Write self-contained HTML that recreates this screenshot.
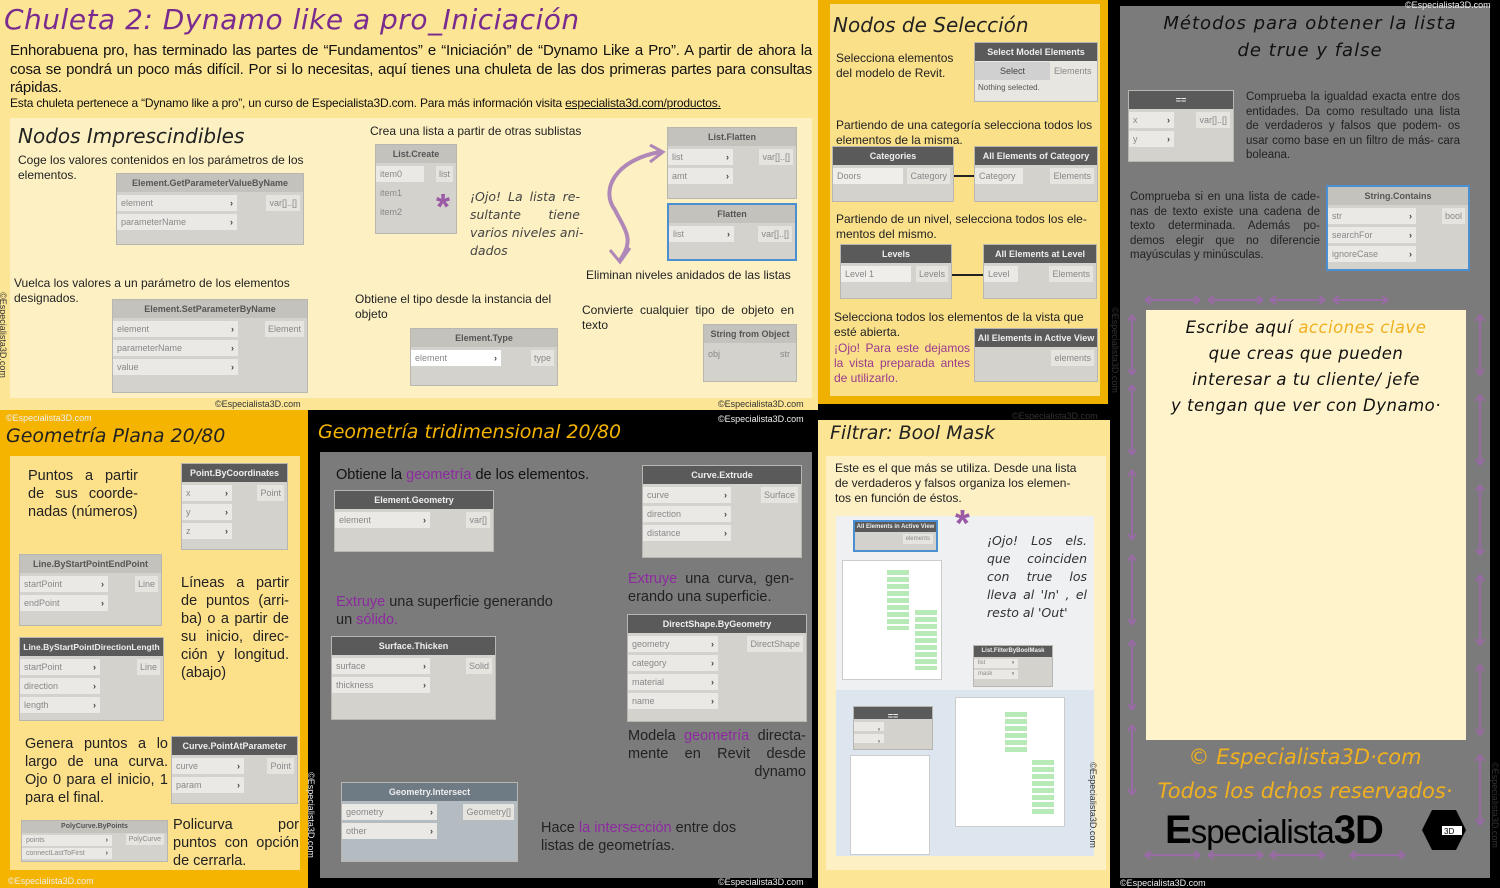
<!DOCTYPE html>
<html><head><meta charset="utf-8">
<style>
*{margin:0;padding:0;box-sizing:border-box}
body{width:1500px;height:888px;position:relative;overflow:hidden;background:#000;font-family:"Liberation Sans",sans-serif}
.a{position:absolute}
.hw{font-family:"DejaVu Sans","Liberation Sans",sans-serif;font-style:italic;font-weight:normal}
.t{font-size:12.5px;color:#222;line-height:15px}
.j{text-align:justify}
.jl div{text-align:justify;text-align-last:justify;white-space:nowrap}
.n{position:absolute;background:#d4d2cd;border:1px solid #b8b6b0;font-size:9px;color:#888;overflow:hidden}
.n .h{background:#c4c2bd;color:#555;text-align:center;height:18px;line-height:18px;font-weight:bold;font-size:9px;white-space:nowrap}
.n.d .h{background:#5a5a5a;color:#eee}
.n .r{background:#ebe9e5;height:16px;line-height:16px;margin-top:3px;padding-left:4px;position:relative}
.n .r:after{content:"›";position:absolute;right:4px;color:#444;font-weight:bold}
.n .r.x:after{content:""}
.n .o{position:absolute;right:3px;background:#e6e4df;padding:0 3px;height:16px;line-height:16px}
.pu{color:#8e2aa0}
.cp{font-size:9px;color:#333}
.cpw{font-size:9px;color:#eee}
</style></head><body>

<!-- top-left panel -->
<div class="a" style="left:0;top:0;width:818px;height:410px;background:#fce594"></div>
<div class="a hw" style="left:4px;top:3px;font-size:28px;color:#7a2b8f;letter-spacing:0.5px">Chuleta 2: Dynamo like a pro_Iniciación</div>
<div class="a" style="left:10px;top:42px;width:802px;font-size:15px;line-height:18.5px;color:#111;text-align:justify;letter-spacing:-0.2px">Enhorabuena pro, has terminado las partes de “Fundamentos” e “Iniciación” de “Dynamo Like a Pro”. A partir de ahora la cosa se pondrá un poco más difícil. Por si lo necesitas, aquí tienes una chuleta de las dos primeras partes para consultas rápidas.</div>
<div class="a" style="left:10px;top:96px;font-size:12px;color:#111;letter-spacing:-0.2px">Esta chuleta pertenece a “Dynamo like a pro”, un curso de Especialista3D.com. Para más información visita <u>especialista3d.com/productos.</u></div>
<div class="a" style="left:10px;top:118px;width:802px;height:280px;background:#fdf1c3"></div>
<div class="a hw" style="left:18px;top:124px;font-size:20px;color:#222">Nodos Imprescindibles</div>
<div class="a t" style="left:18px;top:153px;width:290px;font-size:12px">Coge los valores contenidos en los parámetros de los elementos.</div>
<div class="n" style="left:116px;top:173px;width:188px;height:72px"><div class="h">Element.GetParameterValueByName</div><div class="r" style="width:120px">element</div><div class="r" style="width:120px">parameterName</div><span class="o" style="top:21px">var[]..[]</span></div>
<div class="a t" style="left:14px;top:276px;width:296px;font-size:12px">Vuelca los valores a un parámetro de los elementos designados.</div>
<div class="n" style="left:112px;top:299px;width:196px;height:94px"><div class="h">Element.SetParameterByName</div><div class="r" style="width:125px">element</div><div class="r" style="width:125px">parameterName</div><div class="r" style="width:125px">value</div><span class="o" style="top:21px">Element</span></div>
<div class="a t" style="left:370px;top:124px;font-size:12px">Crea una lista a partir de otras sublistas</div>
<div class="n" style="left:375px;top:144px;width:82px;height:90px"><div class="h">List.Create</div><div class="r x" style="width:48px">item0</div><div class="r x" style="width:40px;background:none">item1</div><div class="r x" style="width:40px;background:none">item2</div><span class="o" style="top:21px">list</span></div>
<div class="a" style="left:436px;top:186px;font-size:36px;color:#9a5aa6;font-weight:bold">*</div>
<div class="a hw jl" style="left:470px;top:188px;width:110px;font-size:12.5px;line-height:18px;color:#444"><div>¡Ojo! La lista re-</div><div>sultante tiene</div><div>varios niveles ani-</div><div style="text-align-last:left">dados</div></div>
<svg class="a" style="left:595px;top:140px" width="80" height="130"><path d="M65 12 C20 20 5 50 20 70 C30 90 40 100 25 120" stroke="#b088b8" stroke-width="4" fill="none"/><path d="M55 5 L68 12 L55 22" stroke="#b088b8" stroke-width="3" fill="none"/><path d="M15 110 L25 122 L35 108" stroke="#b088b8" stroke-width="3" fill="none"/></svg>
<div class="n" style="left:667px;top:127px;width:130px;height:72px"><div class="h">List.Flatten</div><div class="r" style="width:65px">list</div><div class="r" style="width:65px">amt</div><span class="o" style="top:21px">var[]..[]</span></div>
<div class="n" style="left:667px;top:203px;width:130px;height:58px;border:2px solid #4a90d0"><div class="h">Flatten</div><div class="r" style="width:65px">list</div><span class="o" style="top:21px">var[]..[]</span></div>
<div class="a t" style="left:586px;top:268px;font-size:12px">Eliminan niveles anidados de las listas</div>
<div class="a t" style="left:355px;top:292px;width:205px;font-size:12px">Obtiene el tipo desde la instancia del objeto</div>
<div class="n" style="left:410px;top:328px;width:148px;height:58px"><div class="h">Element.Type</div><div class="r" style="width:90px;background:#fff">element</div><span class="o" style="top:21px">type</span></div>
<div class="a t j" style="left:582px;top:303px;width:212px;font-size:12px">Convierte cualquier tipo de objeto en texto</div>
<div class="n" style="left:703px;top:324px;width:94px;height:58px"><div class="h">String from Object</div><div class="r x" style="width:30px;background:none">obj</div><span class="o" style="top:21px;background:none">str</span></div>
<div class="a cp" style="left:215px;top:399px">©Especialista3D.com</div>
<div class="a cp" style="left:718px;top:399px">©Especialista3D.com</div>
<div class="a cp" style="left:-40px;top:330px;transform:rotate(90deg)">©Especialista3D.com</div>

<!-- bottom-left -->
<div class="a" style="left:0;top:410px;width:308px;height:478px;background:#f4b400"></div>
<div class="a cpw" style="left:6px;top:413px">©Especialista3D.com</div>
<div class="a hw" style="left:6px;top:425px;font-size:19px;color:#222">Geometría Plana 20/80</div>
<div class="a" style="left:10px;top:456px;width:290px;height:414px;background:#fde08a"></div>
<div class="a t j" style="left:28px;top:467px;width:110px;font-size:14.5px;line-height:18px">Puntos a partir de sus coorde- nadas (números)</div>
<div class="n d" style="left:181px;top:463px;width:107px;height:87px"><div class="h">Point.ByCoordinates</div><div class="r" style="width:50px">x</div><div class="r" style="width:50px">y</div><div class="r" style="width:50px">z</div><span class="o" style="top:21px">Point</span></div>
<div class="n" style="left:19px;top:554px;width:143px;height:72px"><div class="h">Line.ByStartPointEndPoint</div><div class="r" style="width:88px">startPoint</div><div class="r" style="width:88px">endPoint</div><span class="o" style="top:21px">Line</span></div>
<div class="a t j" style="left:181px;top:574px;width:108px;font-size:14.5px;line-height:18px">Líneas a partir de puntos (arri- ba) o a partir de su inicio, direc- ción y longitud. (abajo)</div>
<div class="n d" style="left:19px;top:637px;width:145px;height:84px"><div class="h" style="font-size:8.5px">Line.ByStartPointDirectionLength</div><div class="r" style="width:80px">startPoint</div><div class="r" style="width:80px">direction</div><div class="r" style="width:80px">length</div><span class="o" style="top:21px">Line</span></div>
<div class="a t j" style="left:25px;top:735px;width:143px;font-size:14.5px;line-height:18px">Genera puntos a lo largo de una curva. Ojo 0 para el inicio, 1 para el final.</div>
<div class="n d" style="left:171px;top:736px;width:127px;height:68px"><div class="h">Curve.PointAtParameter</div><div class="r" style="width:72px">curve</div><div class="r" style="width:72px">param</div><span class="o" style="top:21px">Point</span></div>
<div class="n" style="left:21px;top:820px;width:147px;height:42px;font-size:7px"><div class="h" style="height:12px;line-height:12px;font-size:7px">PolyCurve.ByPoints</div><div class="r" style="width:90px;height:11px;line-height:11px;margin-top:2px">points</div><div class="r" style="width:90px;height:11px;line-height:11px;margin-top:2px">connectLastToFirst</div><span class="o" style="top:13px;height:11px;line-height:11px">PolyCurve</span></div>
<div class="a t j" style="left:173px;top:816px;width:126px;font-size:14.5px;line-height:18px">Policurva por puntos con opción de cerrarla.</div>
<div class="a cpw" style="left:8px;top:876px">©Especialista3D.com</div>

<!-- bottom middle -->
<div class="a cpw" style="left:718px;top:414px">©Especialista3D.com</div>
<div class="a hw" style="left:318px;top:421px;font-size:19px;color:#f4b400">Geometría tridimensional 20/80</div>
<div class="a" style="left:320px;top:452px;width:492px;height:426px;background:#7b7b7b"></div>
<div class="a" style="left:336px;top:467px;font-size:14.5px;color:#111">Obtiene la <span class="pu">geometría</span> de los elementos.</div>
<div class="n d" style="left:334px;top:490px;width:160px;height:62px"><div class="h">Element.Geometry</div><div class="r" style="width:95px">element</div><span class="o" style="top:21px">var[]</span></div>
<div class="n d" style="left:642px;top:465px;width:160px;height:93px"><div class="h">Curve.Extrude</div><div class="r" style="width:88px">curve</div><div class="r" style="width:88px">direction</div><div class="r" style="width:88px">distance</div><span class="o" style="top:21px">Surface</span></div>
<div class="a t j" style="left:628px;top:570px;width:166px;font-size:14.5px;line-height:18px"><span class="pu">Extruye</span> una curva, gen- erando una superficie.</div>
<div class="a t" style="left:336px;top:593px;width:230px;font-size:14.5px;line-height:18px"><span class="pu">Extruye</span> una superficie generando un <span class="pu">sólido.</span></div>
<div class="n d" style="left:331px;top:636px;width:165px;height:84px"><div class="h">Surface.Thicken</div><div class="r" style="width:98px">surface</div><div class="r" style="width:98px">thickness</div><span class="o" style="top:21px">Solid</span></div>
<div class="n d" style="left:627px;top:614px;width:180px;height:108px"><div class="h">DirectShape.ByGeometry</div><div class="r" style="width:90px">geometry</div><div class="r" style="width:90px">category</div><div class="r" style="width:90px">material</div><div class="r" style="width:90px">name</div><span class="o" style="top:21px">DirectShape</span></div>
<div class="a t jl" style="left:628px;top:727px;width:178px;font-size:14.5px;line-height:18px"><div>Modela <span class="pu">geometría</span> directa-</div><div>mente en Revit desde</div><div style="text-align:right;text-align-last:right">dynamo</div></div>
<div class="n" style="left:341px;top:782px;width:177px;height:80px;background:#b4bcc2"><div class="h" style="background:#6e7a84;color:#eee">Geometry.Intersect</div><div class="r" style="width:95px">geometry</div><div class="r" style="width:95px">other</div><span class="o" style="top:21px">Geometry[]</span></div>
<div class="a t" style="left:541px;top:819px;width:230px;font-size:14.5px;line-height:18px">Hace <span class="pu">la intersección</span> entre dos listas de geometrías.</div>
<div class="a cpw" style="left:718px;top:877px">©Especialista3D.com</div>
<div class="a cpw" style="left:268px;top:810px;transform:rotate(90deg)">©Especialista3D.com</div>

<!-- right column top: Nodos de Seleccion -->
<div class="a" style="left:818px;top:0;width:290px;height:404px;background:#f0b000"></div>
<div class="a" style="left:830px;top:4px;width:270px;height:392px;background:#fbe08a"></div>
<div class="a hw" style="left:833px;top:13px;font-size:20px;color:#222">Nodos de Selección</div>
<div class="a t" style="left:836px;top:51px;width:130px;font-size:12px">Selecciona elementos del modelo de Revit.</div>
<div class="n d" style="left:974px;top:42px;width:124px;height:60px;background:#e8e6e0"><div class="h">Select Model Elements</div><div style="display:flex;font-size:9px;height:18px;line-height:18px;margin-top:1px"><div style="background:#d0d0d0;color:#444;width:75px;text-align:center">Select</div><div style="padding-left:4px">Elements</div></div><div style="font-size:8px;color:#555;padding:3px">Nothing selected.</div></div>
<div class="a t" style="left:836px;top:118px;width:264px;font-size:12px">Partiendo de una categoría selecciona todos los elementos de la misma.</div>
<div class="n d" style="left:832px;top:146px;width:122px;height:56px"><div class="h">Categories</div><div class="r x" style="width:70px;background:#f0eeea">Doors</div><span class="o" style="top:21px">Category</span></div>
<div class="n d" style="left:974px;top:146px;width:124px;height:56px"><div class="h">All Elements of Category</div><div class="r x" style="width:48px">Category</div><span class="o" style="top:21px">Elements</span></div>
<div class="a" style="left:954px;top:175px;width:20px;height:2px;background:#222"></div>
<div class="a t" style="left:836px;top:212px;width:264px;font-size:12px">Partiendo de un nivel, selecciona todos los ele- mentos del mismo.</div>
<div class="n d" style="left:840px;top:244px;width:112px;height:55px"><div class="h">Levels</div><div class="r x" style="width:70px;background:#f0eeea">Level 1</div><span class="o" style="top:21px">Levels</span></div>
<div class="n d" style="left:983px;top:244px;width:114px;height:55px"><div class="h">All Elements at Level</div><div class="r x" style="width:34px">Level</div><span class="o" style="top:21px">Elements</span></div>
<div class="a" style="left:952px;top:274px;width:31px;height:2px;background:#222"></div>
<div class="a t" style="left:834px;top:310px;width:264px;font-size:12px">Selecciona todos los elementos de la vista que esté abierta.</div>
<div class="a" style="left:834px;top:341px;width:136px;font-size:12px;line-height:15px;color:#9a3a8e;text-align:justify">¡Ojo! Para este dejamos la vista preparada antes de utilizarlo.</div>
<div class="n d" style="left:974px;top:328px;width:124px;height:54px"><div class="h">All Elements in Active View</div><span class="o" style="top:21px">elements</span></div>
<div class="a cp" style="left:1012px;top:411px">©Especialista3D.com</div>

<!-- Filtrar bool mask -->
<div class="a" style="left:818px;top:420px;width:292px;height:468px;background:#fce594"></div>
<div class="a hw" style="left:830px;top:422px;font-size:19px;color:#222">Filtrar: Bool Mask</div>
<div class="a" style="left:826px;top:456px;width:280px;height:414px;background:#fdf0c4"></div>
<div class="a t" style="left:835px;top:461px;width:252px;font-size:12px">Este es el que más se utiliza. Desde una lista de verdaderos y falsos organiza los elemen- tos en función de éstos.</div>
<div class="a" style="left:836px;top:516px;width:258px;height:340px;background:#eef0f2"></div>
<div class="a" style="left:836px;top:690px;width:258px;height:166px;background:#dde6ee"></div>
<div class="n d" style="left:853px;top:520px;width:85px;height:32px;border:2px solid #4a90d0;font-size:6px"><div class="h" style="height:10px;line-height:10px;font-size:6px">All Elements in Active View</div><span class="o" style="top:12px;height:10px;line-height:10px">elements</span></div>
<div class="a" style="left:842px;top:560px;width:100px;height:120px;background:#fff;border:1px solid #ccc"></div>
<div class="a" style="left:887px;top:570px;width:22px;height:60px;background:repeating-linear-gradient(#b8eab8 0 5px,transparent 5px 7px)"></div>
<div class="a" style="left:915px;top:610px;width:22px;height:60px;background:repeating-linear-gradient(#b8eab8 0 5px,transparent 5px 7px)"></div>
<div class="a" style="left:955px;top:503px;font-size:38px;color:#9a5aa6;font-weight:bold">*</div>
<div class="a hw jl" style="left:987px;top:532px;width:100px;font-size:12.5px;line-height:18px;color:#333"><div>¡Ojo! Los els.</div><div>que coinciden</div><div>con true los</div><div>lleva al 'In' , el</div><div style="text-align-last:left">resto al 'Out'</div></div>
<div class="n d" style="left:973px;top:645px;width:80px;height:42px;font-size:6px"><div class="h" style="height:11px;line-height:11px;font-size:6px">List.FilterByBoolMask</div><div class="r" style="width:44px;height:9px;line-height:9px;margin-top:2px">list</div><div class="r" style="width:44px;height:9px;line-height:9px;margin-top:2px">mask</div></div>
<div class="n d" style="left:853px;top:706px;width:80px;height:44px;font-size:6px"><div class="h" style="height:12px">==</div><div class="r" style="width:30px;height:9px;margin-top:3px"></div><div class="r" style="width:30px;height:9px;margin-top:3px"></div></div>
<div class="a" style="left:850px;top:755px;width:80px;height:100px;background:#fff;border:1px solid #ccc"></div>
<div class="a" style="left:955px;top:697px;width:110px;height:130px;background:#fff;border:1px solid #ccc"></div>
<div class="a" style="left:1005px;top:712px;width:22px;height:40px;background:repeating-linear-gradient(#b8eab8 0 5px,transparent 5px 7px)"></div>
<div class="a" style="left:1032px;top:760px;width:22px;height:55px;background:repeating-linear-gradient(#b8eab8 0 5px,transparent 5px 7px)"></div>
<div class="a cp" style="left:1050px;top:800px;transform:rotate(90deg)">©Especialista3D.com</div>

<!-- far right -->
<div class="a" style="left:1120px;top:6px;width:370px;height:872px;background:#7b7b7b"></div>
<div class="a cpw" style="left:1405px;top:0px">©Especialista3D.com</div>
<div class="a hw" style="left:1130px;top:10px;width:360px;text-align:center;font-size:18px;line-height:27px;color:#111;letter-spacing:1px">Métodos para obtener la lista<br>de true y false</div>
<div class="n d" style="left:1128px;top:90px;width:106px;height:72px"><div class="h">==</div><div class="r" style="width:45px">x</div><div class="r" style="width:45px">y</div><span class="o" style="top:21px">var[]..[]</span></div>
<div class="a t j" style="left:1246px;top:90px;width:214px;font-size:11.5px;line-height:14.5px">Comprueba la igualdad exacta entre dos entidades. Da como resultado una lista de verdaderos y falsos que podem- os usar como base en un filtro de más- cara boleana.</div>
<div class="a t j" style="left:1130px;top:190px;width:190px;font-size:11.5px;line-height:14.5px">Comprueba si en una lista de cade- nas de texto existe una cadena de texto determinada. Además po- demos elegir que no diferencie mayúsculas y minúsculas.</div>
<div class="n" style="left:1326px;top:185px;width:144px;height:86px;border:2px solid #4a90d0"><div class="h">String.Contains</div><div class="r" style="width:88px">str</div><div class="r" style="width:88px">searchFor</div><div class="r" style="width:88px">ignoreCase</div><span class="o" style="top:21px">bool</span></div>
<svg class="a" style="left:1120px;top:285px" width="370" height="600">
<g stroke="#9a6aa6" stroke-width="2" fill="none">
<path d="M25 15h55M25 15l6-4M25 15l6 4M80 15l-6-4M80 15l-6 4"/>
<path d="M88 15h55M88 15l6-4M88 15l6 4M143 15l-6-4M143 15l-6 4"/>
<path d="M150 15h55M150 15l6-4M150 15l6 4M205 15l-6-4M205 15l-6 4"/>
<path d="M213 15h55M213 15l6-4M213 15l6 4M268 15l-6-4M268 15l-6 4"/>
<path d="M25 570h55M25 570l6-4M25 570l6 4M80 570l-6-4M80 570l-6 4"/>
<path d="M88 570h55M88 570l6-4M88 570l6 4M143 570l-6-4M143 570l-6 4"/>
<path d="M150 570h55M150 570l6-4M150 570l6 4M205 570l-6-4M205 570l-6 4"/>
<path d="M230 570h55M230 570l6-4M230 570l6 4M285 570l-6-4M285 570l-6 4"/>
<path d="M12 30v60M12 30l-4 6M12 30l4 6M12 90l-4-6M12 90l4-6"/>
<path d="M12 100v70M12 100l-4 6M12 100l4 6M12 170l-4-6M12 170l4-6"/>
<path d="M12 185v70M12 185l-4 6M12 185l4 6M12 255l-4-6M12 255l4-6"/>
<path d="M12 270v70M12 270l-4 6M12 270l4 6M12 340l-4-6M12 340l4-6"/>
<path d="M12 355v70M12 355l-4 6M12 355l4 6M12 425l-4-6M12 425l4-6"/>
<path d="M12 440v70M12 440l-4 6M12 440l4 6M12 510l-4-6M12 510l4-6"/>
<path d="M360 30v60M360 30l-4 6M360 30l4 6M360 90l-4-6M360 90l4-6"/>
<path d="M360 110v70M360 110l-4 6M360 110l4 6M360 180l-4-6M360 180l4-6"/>
<path d="M360 200v70M360 200l-4 6M360 200l4 6M360 270l-4-6M360 270l4-6"/>
<path d="M360 290v70M360 290l-4 6M360 290l4 6M360 360l-4-6M360 360l4-6"/>
<path d="M360 380v70M360 380l-4 6M360 380l4 6M360 450l-4-6M360 450l4-6"/>
<path d="M360 470v70M360 470l-4 6M360 470l4 6M360 540l-4-6M360 540l4-6"/>
</g></svg>
<div class="a" style="left:1146px;top:310px;width:320px;height:430px;background:#fff3cc"></div>
<div class="a hw" style="left:1146px;top:315px;width:320px;text-align:center;font-size:16.5px;line-height:26px;color:#111;letter-spacing:0.5px">Escribe aquí <span style="color:#f0b020">acciones clave</span><br>que creas que pueden<br>interesar a tu cliente/ jefe<br>y tengan que ver con Dynamo·</div>
<div class="a hw" style="left:1130px;top:740px;width:350px;text-align:center;font-size:21px;line-height:34px;color:#f0b020">© Especialista3D·com<br>Todos los dchos reservados·</div>
<div class="a" style="left:1165px;top:808px;font-size:40px;font-weight:bold;color:#000;letter-spacing:-1px">E<span style="font-size:33px;font-weight:normal">specialista</span>3D</div>
<svg class="a" style="left:1420px;top:808px" width="48" height="44"><path d="M12 2h24l10 20-10 20H12L2 22z" fill="#000"/><rect x="22" y="18" width="20" height="9" fill="#fff"/><text x="24" y="26" font-size="8" font-family="Liberation Sans">3D</text></svg>
<div class="a cpw" style="left:1120px;top:878px">©Especialista3D.com</div>
<div class="a cp" style="left:1452px;top:800px;transform:rotate(90deg)">©Especialista3D.com</div>
<div class="a cp" style="left:1072px;top:345px;transform:rotate(90deg)">©Especialista3D.com</div>
</body></html>
